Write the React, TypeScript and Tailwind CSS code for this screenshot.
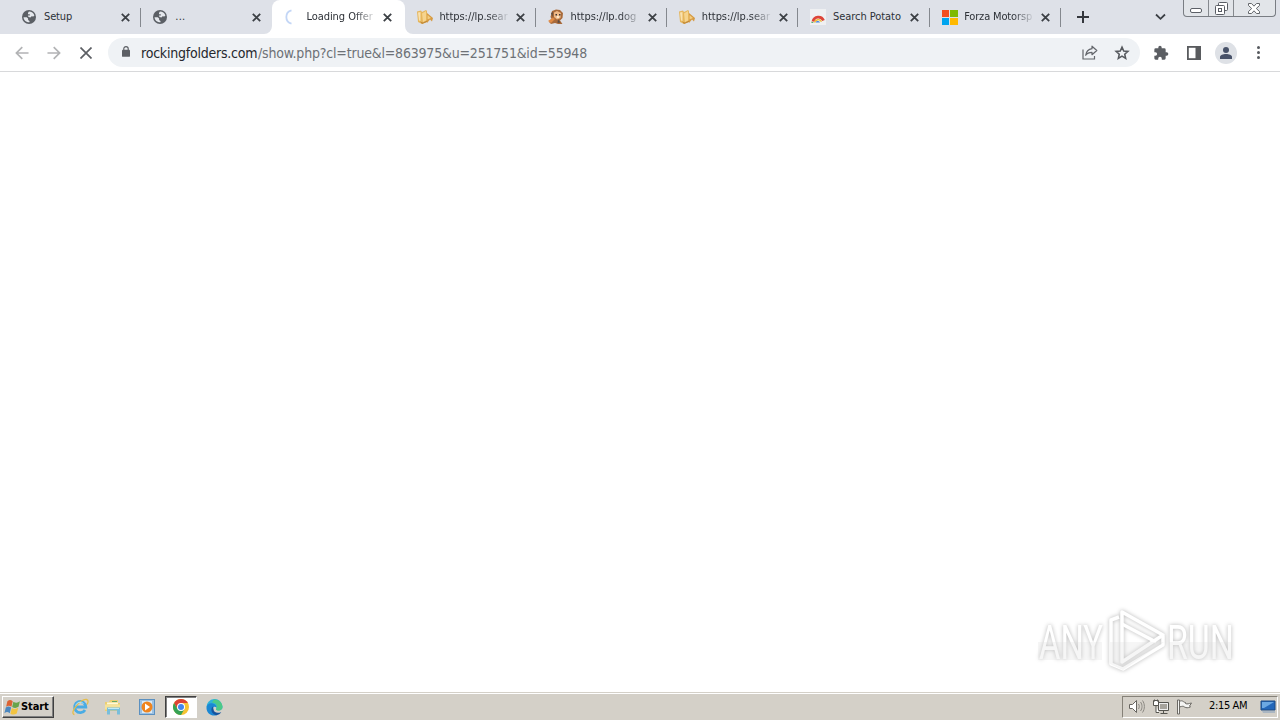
import React from 'react'
import { clsx } from 'clsx'

type Favicon = 'globe' | 'spinner' | 'folder' | 'dog' | 'rainbow' | 'microsoft'

interface TabData {
  icon: Favicon
  title: string
  active?: boolean
  divider?: boolean
  fade?: boolean
  className?: string
}

const tabs: TabData[] = [
  { icon: 'globe', title: 'Setup', divider: true, className: 'tracking-[-0.15px]' },
  { icon: 'globe', title: '...', className: 'tracking-[0.3px]' },
  { icon: 'spinner', title: 'Loading Offer', active: true, fade: true, className: 'tracking-[-0.05px]' },
  { icon: 'folder', title: 'https://lp.sear', divider: true, fade: true, className: 'tracking-[-0.05px]' },
  { icon: 'dog', title: 'https://lp.dog', divider: true, fade: true, className: 'tracking-[-0.05px]' },
  { icon: 'folder', title: 'https://lp.sear', divider: true, fade: true, className: 'tracking-[-0.05px]' },
  { icon: 'rainbow', title: 'Search Potato', divider: true, className: 'tracking-[-0.05px]' },
  { icon: 'microsoft', title: 'Forza Motorsp', divider: true, fade: true, className: 'tracking-[-0.15px]' },
]

const TabIcon = ({ icon }: { icon: Favicon }) => {
  if (icon === 'globe') {
    return (
      <svg className="size-4" viewBox="0 0 16 16">
        <circle cx="7" cy="8" r="7" fill="#5b5f65" />
        <path d="M1.500 8.200h3.300l1.300 1.400v1.300l1.400 1.200v1.200C4.200 13.300 1.700 11.100 1.500 8.200zM6.900 2.600c2.600 0 4.700 1.500 5.500 3.900l-1.100.9-1.700-.2-1.200 1.200-1.900-.3-.7-1.500h2V5.200H6V3.900z" fill="#e4e7ec" />
      </svg>
    )
  }
  if (icon === 'spinner') {
    return (
      <svg className="size-4" viewBox="0 0 16 16" fill="none">
        <path d="M7.500 1.400A6.800 6.800 0 0 0 7.500 14.600" stroke="#c3d6f6" strokeWidth="1.800" />
      </svg>
    )
  }
  if (icon === 'folder') {
    return (
      <svg className="size-4" viewBox="0 0 16 16">
        <path d="M0 2.500 4 1.500l1 1.500 4-2 1 1v11l-5 2-4-2z" fill="#e6b65c" />
        <path d="M5 4.500 9 2v9.500L6 13z" fill="#f6d48e" />
        <path d="M1 3.500 3.500 3v9L2 11.500z" fill="#f9e2b0" />
        <path d="m10 4 6 5-1 3.500-2-2L10 14z" fill="#d69a42" />
        <path d="m10.500 6 3.500 3-3.500 1.500z" fill="#f3cd80" />
        <path d="M3 12.500 6 13.500l4-2v1.500l-5 2z" fill="#c08838" />
      </svg>
    )
  }
  if (icon === 'dog') {
    return (
      <svg className="size-4" viewBox="0 0 16 16">
        <path d="m4 2 4-1.500 4 .5 3 3-.5 5-2.500 2.500 2.500 3.500H10l-3-1-4 1-2-2 3-2.500L2.500 8z" fill="#a96a3a" />
        <path d="M6 3.500 9 2l4 2-.5 5-3.500 1.500L6 8z" fill="#efb987" />
        <path d="M7.500 5h1.500v1.500H7.500zM11 5h1.500v1.500H11z" fill="#3c3432" />
        <path d="m9 7 2.500.5-1 1.500-2-.5z" fill="#fff2db" />
        <path d="m0 12 5-3.500L7 10l-4 4z" fill="#e28b44" />
        <path d="m3 4 2-1-.5 5zM10 10.500l2.500 3-3 .5z" fill="#5c4c42" />
      </svg>
    )
  }
  if (icon === 'rainbow') {
    return (
      <svg className="size-4" viewBox="0 0 16 16">
        <rect width="16" height="16" fill="#eff0f2" />
        <path d="M3 12.500a5.500 5.500 0 0 1 10.500-1" fill="none" stroke="#dd4438" strokeWidth="2.800" />
        <path d="M4.500 13.500a3.800 3.800 0 0 1 7-.8" fill="none" stroke="#edbb32" strokeWidth="1.300" />
        <path d="M5.500 13.500a2.500 2.500 0 0 1 4.500 0z" fill="#4b83dc" />
        <path d="M1.500 12.500v1.500h2.500z" fill="#4ba35e" />
      </svg>
    )
  }
  return (
    <span className="grid h-[15px] w-4 grid-cols-2 gap-px">
      <span className="bg-[#f25022]" />
      <span className="bg-[#7fba00]" />
      <span className="bg-[#00a4ef]" />
      <span className="bg-[#ffb900]" />
    </span>
  )
}

const Tab = ({ icon, title, active, divider, fade, className }: TabData) => (
  <div className={clsx('relative flex h-[34px] shrink-0 items-center pl-3', active ? 'w-[133px] rounded-t-lg bg-white' : 'w-[131.200px]')}>
    {active && (
      <>
        <svg className="absolute bottom-0 -left-2 size-2" viewBox="0 0 8 8"><path d="M8 0v8H0a8 8 0 0 0 8-8" fill="#fff" /></svg>
        <svg className="absolute -right-2 bottom-0 size-2" viewBox="0 0 8 8"><path d="M0 0v8h8a8 8 0 0 1-8-8" fill="#fff" /></svg>
      </>
    )}
    <TabIcon icon={icon} />
    <span
      className={clsx(
        'mt-px ml-[6.500px] w-[74px] text-[11px] whitespace-nowrap text-[#2d3137]',
        fade && '[mask-image:linear-gradient(to_right,black_66%,transparent_96%)]',
        className
      )}
    >
      {title}
    </span>
    <svg className="ml-[3px] size-[9px] shrink-0" viewBox="0 0 9 9">
      <path d="m.8.8 7.400 7.400M8.200.800.800 8.200" stroke="#3c4045" strokeWidth="1.800" />
    </svg>
    {divider && <span className="absolute right-0 top-2 h-[19px] w-px bg-[#84888e]" />}
  </div>
)

const WindowButtons = () => (
  <div className="flex h-[17px] w-[93px] rounded-b-[4px] border border-t-0 border-[#797d83] bg-[#e2e5e9]">
    <div className="flex w-[25px] items-center justify-center border-r border-[#85898e]">
      <svg className="mt-[4px] h-[5px] w-[12px]" viewBox="0 0 12 5"><rect x=".5" y=".5" width="11" height="4" rx="1.500" fill="#fff" stroke="#5c6067" /></svg>
    </div>
    <div className="flex w-[25px] items-center justify-center border-r border-[#85898e]">
      <svg className="size-[13px]" viewBox="0 0 13 13" fill="#fff" stroke="#595d64">
        <rect x="3.500" y=".5" width="9" height="8" rx="1" /><rect x=".5" y="3.500" width="9" height="9" rx="1" /><rect x="3.500" y="6.500" width="3" height="3" />
      </svg>
    </div>
    <div className="flex flex-1 items-center justify-center">
      <svg className="mr-px h-[11px] w-[12px]" viewBox="0 0 12 11" fill="#fff" stroke="#63666b">
        <path d="M.5.500h3L6 3.200 8.500.500h3v2L8.300 5.500l3.200 3v2h-3L6 7.800l-2.500 2.700h-3v-2l3.200-3-3.200-3z" />
      </svg>
    </div>
  </div>
)

const TabStrip = () => (
  <div className="flex h-[34px] bg-[#dee1e8] pl-[9.500px]">
    {tabs.map((tab, i) => <Tab key={i} {...tab} />)}
    <svg className="mt-[11px] ml-[16px] size-3" viewBox="0 0 12 12"><path d="M6 0v12M0 6h12" stroke="#34373d" strokeWidth="2" /></svg>
    <svg className="mt-[13px] ml-[66px] h-[8px] w-[11px]" viewBox="0 0 11 8" fill="none"><path d="m1 1.500 4.500 4.300L10 1.500" stroke="#3b3f45" strokeWidth="1.800" /></svg>
    <div className="mr-1 ml-auto"><WindowButtons /></div>
  </div>
)

const Toolbar = () => (
  <div className="flex h-[38px] items-center border-b border-[#d8d9db] bg-white pl-[15px]">
    <svg className="size-[14px]" viewBox="0 0 15 15" fill="none" stroke="#b2b3b5" strokeWidth="1.800"><path d="M14.500 7.500h-13M7.800 1.200 1.500 7.500l6.300 6.300" /></svg>
    <svg className="ml-[18px] size-[14px]" viewBox="0 0 15 15" fill="none" stroke="#b2b3b5" strokeWidth="1.800"><path d="M.5 7.500h13M7.200 1.200l6.300 6.300-6.300 6.300" /></svg>
    <svg className="ml-[19px] size-3" viewBox="0 0 12 12" fill="none" stroke="#5c5f64" strokeWidth="1.700"><path d="m.5.500 11 11M11.500.500l-11 11" /></svg>
    <div className="ml-4 flex h-[29px] w-[1032px] items-center rounded-full bg-[#eff2f5] pl-[14px]">
      <svg className="mb-0.5 h-[11px] w-[8px]" viewBox="0 0 9 12"><rect y="4" width="9" height="8" rx="1" fill="#5c5f64" /><path d="M2 5V3a2.500 2.500 0 0 1 5 0v2" fill="none" stroke="#5c5f64" strokeWidth="1.300" /></svg>
      <div className="mt-px ml-[11px] flex text-[14px] whitespace-nowrap text-[#6d7176]">
        <span className="w-[117px] tracking-[-0.22px] text-[#25282d]">rockingfolders.com</span>
        <span className="tracking-[-0.19px]">/show.php?cl=true&amp;l=863975&amp;u=251751&amp;id=55948</span>
      </div>
      <svg className="mr-px ml-auto h-[15px] w-[16px]" viewBox="0 0 16 15" fill="none" stroke="#63666b" strokeWidth="1.200">
        <path d="M1 4.500v9.500h11.500v-3" /><path d="M10 1.200 14.800 5.500 10 9.700V7.300C7 7.300 5 8.200 3.700 10.300 4.200 6.500 6.500 4.200 10 3.700z" strokeLinejoin="round" />
      </svg>
      <svg className="mr-[10px] ml-[15px] size-4" viewBox="0 0 24 24" fill="none" stroke="#56595e" strokeWidth="2.300"><path d="m12 3.200 2.600 5.800 6.300.6-4.800 4.200 1.400 6.200-5.500-3.300L6.500 20l1.400-6.200-4.800-4.200 6.300-.6z" /></svg>
    </div>
    <svg className="ml-[13px] size-4" viewBox="0 0 24 24" fill="#5b5e63"><path d="M20.500 11H19V7a2 2 0 0 0-2-2h-4V3.500a2.500 2.500 0 0 0-5 0V5H4a2 2 0 0 0-2 2v3.800h1.500a2.700 2.700 0 0 1 0 5.400H2V20a2 2 0 0 0 2 2h3.800v-1.500a2.700 2.700 0 0 1 5.400 0V22H17a2 2 0 0 0 2-2v-4h1.500a2.500 2.500 0 0 0 0-5z" /></svg>
    <svg className="ml-[18px] h-[14px] w-[14px]" viewBox="0 0 14 14"><path d="M0 0h14v14H0z" fill="#595b5e" /><path d="M1.800 1.800h6.700v10.400H1.800z" fill="#fff" /></svg>
    <div className="ml-[14px] flex size-[22px] items-center justify-center rounded-full bg-[#dee1e6]">
      <svg className="size-3" viewBox="0 0 12 12" fill="#485269"><circle cx="6" cy="3" r="3" /><path d="M0 12v-2c0-2 3-3 6-3s6 1 6 3v2z" /></svg>
    </div>
    <svg className="ml-[20px] h-[13px] w-[3px]" viewBox="0 0 3 13" fill="#56595e"><circle cx="1.500" cy="1.500" r="1.500" /><circle cx="1.500" cy="6.500" r="1.500" /><circle cx="1.500" cy="11.500" r="1.500" /></svg>
  </div>
)

const Watermark = () => (
  <svg className="mr-[40px] mb-[12px] h-[80px] w-[210px]" viewBox="1030 600 210 80">
    <g className="drop-shadow-[0_0_2px_#b4b4b4]" fill="#fff" fontFamily="Roboto, sans-serif" fontSize="49">
      <text x="1039" y="659" textLength="64" lengthAdjust="spacingAndGlyphs">ANY</text>
      <text x="1167" y="659" textLength="67" lengthAdjust="spacingAndGlyphs">RUN</text>
      <g fill="none" stroke="#fff" strokeWidth="3.500" strokeLinejoin="round">
        <path d="M1122 612v50l41-27z" />
        <path d="M1119 617l-8 3v44l12 5 40-24v-9M1122 624l34 18" />
      </g>
    </g>
    <path d="M1038 642h64v18h-64zM1110 642h54l-41 28-13-6zM1169 642h63v18h-63z" fill="#ddd" opacity=".25" />
  </svg>
)

const WindowsFlag = () => (
  <svg className="size-[17px]" viewBox="0 0 16 16">
    <path d="M3.200 2c2-1.500 3-1.500 5 0L7 7.300c-2-1.300-3-1.300-5 0z" fill="#dc6333" />
    <path d="M8.800 2.500c2 1.300 4 1.300 6.200-.3l-1.300 5.200c-2 1.300-4 1.300-6 .2z" fill="#69a44a" />
    <path d="M1.700 8c2-1.300 3-1.300 5 0l-1.300 5.300c-2-1.300-3-1.300-5 0z" fill="#4b87bf" />
    <path d="M7.400 8.500c2 1.200 4 1.200 6-.2L12 13.600c-2 1.300-4 1.300-6 .2z" fill="#f3c440" />
  </svg>
)

const ExplorerIcon = () => (
  <svg className="size-[18px]" viewBox="0 0 18 18">
    <path d="M14 12a5.600 5.600 0 1 1 .8-3H5" fill="none" stroke="#4aace4" strokeWidth="2.800" />
    <path d="M3.500 16.500C-2.500 15 10 .5 15.500 1.500c2.500.5 1.500 3.500.5 5" fill="none" stroke="#e5bd4a" strokeWidth="1.300" />
    <path d="M4.500 7.500a5 5 0 0 1 8-2" fill="none" stroke="#b5e2f6" />
  </svg>
)

const FilesIcon = () => (
  <svg className="size-[18px]" viewBox="0 0 18 18">
    <path d="M1 4h4l1-2h8v3h2v8H1z" fill="#eccf72" /><path d="M3 4.500h11v2H3z" fill="#fff9d8" /><path d="M8 3h5v1H8z" fill="#67a869" />
    <path d="M1 6.500h15v5H1z" fill="#f5e29b" /><path d="M3 9.500h13v7h-3v-4H6v4H3z" fill="#79bedb" />
    <path d="M4 10h11v1H4z" fill="#c1e9f6" />
  </svg>
)

const MediaIcon = () => (
  <svg className="size-[16px]" viewBox="0 0 16 16">
    <rect x=".5" y=".5" width="15" height="15" fill="#9cc1e2" stroke="#5b90c0" /><path d="M3 2h10v12H3z" fill="#d9eaf6" /><circle cx="8" cy="8" r="5.500" fill="#ef841e" /><path d="m6 4.500 5 3.500-5 3.500z" fill="#fff" />
  </svg>
)

const ChromeIcon = () => (
  <svg className="size-[16px]" viewBox="0 0 16 16">
    <circle cx="8" cy="8" r="8" fill="#f6c332" />
    <path d="M8 4H14.900A8 8 0 0 0 1.070 4L4.500 10z" fill="#dd4335" />
    <path d="M1.070 4A8 8 0 0 0 8 16l3.500-6H4.500z" fill="#35a255" />
    <circle cx="8" cy="8" r="4" fill="#fff" /><circle cx="8" cy="8" r="3" fill="#4386ed" />
  </svg>
)

const EdgeIcon = () => (
  <svg className="size-[17px]" viewBox="0 0 17 17">
    <path d="M.5 8.500a8 8 0 0 1 16-1c.3 2.700-1.500 4-3.700 4-2.300 0-3.300-.8-2.500-1.800C11 7.500 9 6 6.500 6.500 3.500 7 1 8 .5 8.500z" fill="#2fb4d8" />
    <path d="M8 .500c5-.3 8.500 3.500 8.500 7.500 0 2.300-1.700 3.500-3.700 3.500-2.300 0-3.300-.8-2.500-1.800C11.500 6.500 10.500 4 6 3.500z" fill="#4cc987" />
    <path d="M.5 9C.5 5 4 3.500 7 4.500c2.500.8 3.500 2.500 3.500 4C9 7 7.500 7.500 7 9.500c-.5 3 2 5 5 4.800l-1.500 2C5 17.500.500 14 .500 9z" fill="#1b87d3" />
    <path d="M6.500 7.500c-2.500 3.500-.5 8 4 8.800 2-.4 3.700-1.600 4.800-3.300-4 2-8 .3-7.800-3z" fill="#15549f" />
  </svg>
)

const Tray = () => (
  <div className="mr-px ml-auto flex h-[22px] w-[156px] items-center border border-t-[#858178] border-r-white border-b-white border-l-[#858178] pl-[6px]">
    <svg className="h-[15px] w-[16px]" viewBox="0 0 16 15" fill="none" stroke="#66645f">
      <path d="M.5 5.500h3L7.500 1.500v12L3.500 9.500h-3z" fill="#fff" /><path d="M9.500 5c1 1.500 1 3.500 0 5M11.500 3c2 2.500 2 6.500 0 9M13.500 1.500c2.500 3.500 2.500 8.500 0 12" stroke="#8b8882" />
    </svg>
    <svg className="ml-[8px] size-[16px]" viewBox="0 0 16 16" fill="#eee" stroke="#55544f">
      <path d="M5.500 3.500h10v8h-10zM7.500 14.500h7M10.500 11.500v3" /><path d="M7 5h7v5H7z" fill="#a6a39c" stroke="none" /><path d="M.5 1.500h5v5h-5zM1.500.500v2M4.500.500v2M3 6.500v7h3" fill="#fff" />
    </svg>
    <svg className="ml-[8px] size-[16px]" viewBox="0 0 16 16" stroke="#6b6964" fill="#f5f5f3"><path d="M.5 1v14h2V1z" /><path d="M2.500 2.500c3-2 4 1 6 1v1c2 1 3 0 6-.5l-2 3 1 1c-3 1-4 1-6 0-1-1-2-1-5 0z" /></svg>
    <span className="ml-[16px] w-[42px] text-[11px] tracking-[-0.35px] whitespace-nowrap text-black">2:15 AM</span>
    <svg className="ml-[9px] h-[14px] w-[16px]" viewBox="0 0 16 14"><path d="M1 1h14v9H1z" fill="#2367b9" stroke="#1d4a82" /><path d="M2 2h12L4 8H2z" fill="#6ba8e2" /><path d="M2 11h13v2H3z" fill="#aab6c2" /></svg>
  </div>
)

const Taskbar = () => (
  <div className="flex h-[28px] items-center border-t border-[#d4d0c8] bg-[#d4d0c8] px-px shadow-[inset_0_1px_0_white]">
    <div className="mt-px ml-px flex h-[22px] w-[52px] items-center border border-t-white border-r-[#404040] border-b-[#404040] border-l-white pl-px shadow-[inset_-1px_-1px_0_#808080]">
      <WindowsFlag />
      <span className="mt-px text-[11px] font-bold tracking-[-0.1px] text-black">Start</span>
    </div>
    <div className="mt-px ml-[17px] flex items-center">
      <ExplorerIcon />
      <div className="ml-[15px]"><FilesIcon /></div>
      <div className="ml-[17px]"><MediaIcon /></div>
      <div className="ml-[10px] flex h-[22px] w-[32px] items-center justify-center border border-t-[#404040] border-r-white border-b-white border-l-[#404040] bg-white shadow-[inset_1px_1px_0_#808080]"><ChromeIcon /></div>
      <div className="ml-[9px]"><EdgeIcon /></div>
    </div>
    <Tray />
  </div>
)

export default function App() {
  return (
    <div className="flex h-[720px] w-[1280px] flex-col overflow-hidden bg-white font-['DejaVu_Sans_Condensed','DejaVu_Sans',sans-serif]">
      <TabStrip />
      <Toolbar />
      <main className="flex flex-1 items-end justify-end">
        <Watermark />
      </main>
      <Taskbar />
    </div>
  )
}
